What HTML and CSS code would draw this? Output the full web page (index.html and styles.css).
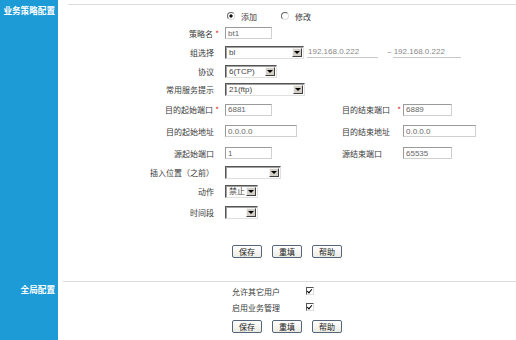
FILE: index.html
```html
<!DOCTYPE html>
<html>
<head>
<meta charset="utf-8">
<link rel="stylesheet" href="styles.css">
</head>
<body>
<div class="page">
  <div class="side side-top"><span>业务策略配置</span></div>
  <div class="main">
    <div class="topline"></div>
    <div class="form">
      <div class="lbl"></div>
      <div class="fld span3">
        <label class="opt"><input type="radio" name="mode" class="rd" checked>添加</label>
        <label class="opt opt2"><input type="radio" name="mode" class="rd">修改</label>
      </div>

      <div class="lbl">策略名<i class="req">*</i></div>
      <div class="fld span3"><input class="txt w47" value="bt1"></div>

      <div class="lbl">组选择</div>
      <div class="fld span3">
        <span class="sel w79"><span class="v">bl</span><span class="ar"></span></span>
        <input class="ip ip1" value="192.168.0.222">
        <span class="tilde">~</span>
        <input class="ip ip2" value="192.168.0.222">
      </div>

      <div class="lbl">协议</div>
      <div class="fld span3"><span class="sel w52"><span class="v">6(TCP)</span><span class="ar"></span></span></div>

      <div class="lbl">常用服务提示</div>
      <div class="fld span3"><span class="sel w80"><span class="v">21(ftp)</span><span class="ar"></span></span></div>

      <div class="lbl">目的起始端口<i class="req">*</i></div>
      <div class="fld"><input class="txt w47" value="6881"></div>
      <div class="lbl2">目的结束端口<i class="req2">*</i></div>
      <div class="fld"><input class="txt w49" value="6889"></div>

      <div class="lbl">目的起始地址</div>
      <div class="fld"><input class="txt w72" value="0.0.0.0"></div>
      <div class="lbl2">目的结束地址</div>
      <div class="fld"><input class="txt w73" value="0.0.0.0"></div>

      <div class="lbl">源起始端口</div>
      <div class="fld"><input class="txt w47" value="1"></div>
      <div class="lbl2">源结束端口</div>
      <div class="fld"><input class="txt w49" value="65535"></div>

      <div class="lbl">插入位置（之前）</div>
      <div class="fld span3"><span class="sel w56"><span class="v"></span><span class="ar"></span></span></div>

      <div class="lbl">动作</div>
      <div class="fld span3"><span class="sel w33"><span class="v">禁止</span><span class="ar"></span></span></div>

      <div class="lbl">时间段</div>
      <div class="fld span3"><span class="sel w33"><span class="v"></span><span class="ar"></span></span></div>
    </div>
    <div class="btns btns1">
      <button class="btn">保存</button>
      <button class="btn">重填</button>
      <button class="btn">帮助</button>
    </div>
  </div>

  <div class="side side-bottom"><span>全局配置</span></div>
  <div class="main2">
    <div class="glob">
      <span class="gl">允许其它用户</span><span class="gc"><input type="checkbox" class="cb" checked></span>
      <span class="gl">启用业务管理</span><span class="gc"><input type="checkbox" class="cb" checked></span>
    </div>
    <div class="btns btns2">
      <button class="btn">保存</button>
      <button class="btn">重填</button>
      <button class="btn">帮助</button>
    </div>
  </div>
</div>
</body>
</html>
```

FILE: styles.css
```css
html, body {
  margin: 0;
  padding: 0;
  background: #fff;
}
body {
  font-family: "Noto Sans CJK SC", "Liberation Sans", sans-serif;
  font-size: 8px;
  color: #3a3a3a;
}
.page {
  width: 516px;
  height: 340px;
  display: grid;
  grid-template-columns: 58px 1fr;
  grid-template-rows: 281px 59px;
  overflow: hidden;
}
.side {
  background: #1d9bd6;
  color: #fff;
  font-weight: bold;
  font-size: 8.6px;
  text-align: right;
  padding-right: 3px;
  line-height: 10px;
  white-space: nowrap;
}
.side-top { padding-top: 5px; }
.side-bottom { padding-top: 3px; }

.main {
  padding-top: 4px;
}
.topline {
  border-top: 1px solid #dcdcdc;
  margin-left: 10px;
}
.form {
  margin-top: 3px;
  display: grid;
  grid-template-columns: 167px 117px 61px 1fr;
  grid-template-rows: 16px 18px 20px 18px 19px 21px 22px 22px 17px 20px 22px;
}
.lbl {
  text-align: right;
  padding-right: 11px;
  display: flex;
  align-items: center;
  justify-content: flex-end;
  white-space: nowrap;
}
.lbl2 {
  display: flex;
  align-items: center;
  white-space: nowrap;
  padding-right: 2px;
}
.req {
  font-style: normal;
  color: #e01010;
  width: 5px;
  margin-right: -5px;
  padding-left: 1px;
  font-size: 8px;
}
.req2 {
  font-style: normal;
  color: #e01010;
  margin-left: auto;
  font-size: 8px;
}
.fld {
  display: flex;
  align-items: center;
}
.span3 { grid-column: 2 / 5; }

.opt {
  display: flex;
  align-items: center;
  margin-left: 2px;
  color: #3a3a3a;
}
.opt2 { margin-left: 24px; }
.rd {
  appearance: none;
  -webkit-appearance: none;
  width: 8px;
  height: 8px;
  margin: 0 6px 0 0;
  border-radius: 50%;
  border: 1px solid;
  border-color: #666 #ddd #ddd #666;
  background: #fff;
  box-sizing: border-box;
}
.rd:checked {
  background: radial-gradient(circle, #111 0, #111 1.4px, #fff 1.8px);
}

.txt {
  box-sizing: border-box;
  height: 12px;
  border: 1px solid;
  border-color: #9a9a9a #d0d0d0 #d0d0d0 #9a9a9a;
  padding: 0 2px;
  margin: 0;
  font-family: "Liberation Sans", sans-serif;
  font-size: 8px;
  color: #666;
  background: #fff;
  outline: none;
}
.w47 { width: 47px; }
.w49 { width: 49px; }
.w72 { width: 72px; }
.w73 { width: 73px; }

.ip {
  box-sizing: border-box;
  height: 12px;
  border: 0;
  border-bottom: 1px solid #c8c8c8;
  padding: 0 1px;
  margin: 0;
  font-family: "Liberation Sans", sans-serif;
  font-size: 8px;
  color: #888;
  background: transparent;
  outline: none;
}
.ip1 { width: 71px; margin-left: 3px; }
.tilde {
  color: #888;
  font-family: "Liberation Sans", sans-serif;
  margin: 0 1px 0 9px;
}
.ip2 { width: 68px; }

.sel {
  display: inline-flex;
  box-sizing: border-box;
  height: 13px;
  border: 1px solid;
  border-color: #555 #e0e0e0 #e0e0e0 #555;
  box-shadow: inset 1px 1px 0 #a0a0a0;
  background: #fff;
  align-items: center;
}
.sel .v {
  flex: 1;
  padding-left: 3px;
  font-family: "Liberation Sans", "Noto Sans CJK SC", sans-serif;
  font-size: 8px;
  color: #444;
  line-height: 11px;
  white-space: nowrap;
  overflow: hidden;
}
.sel .ar {
  width: 10px;
  height: 9px;
  margin-right: 1px;
  box-sizing: border-box;
  background: #d4d0c8;
  border: 1px solid;
  border-color: #f4f4f4 #404040 #404040 #f4f4f4;
  display: flex;
  align-items: center;
  justify-content: center;
}
.sel .ar::after {
  content: "";
  border-left: 3px solid transparent;
  border-right: 3px solid transparent;
  border-top: 3px solid #000;
}
.w79 { width: 79px; }
.w52 { width: 52px; }
.w80 { width: 80px; }
.w56 { width: 56px; }
.w33 { width: 33px; }

.btns {
  display: flex;
  gap: 10px;
  padding-left: 174px;
}
.btns1 { margin-top: 22px; }
.btn {
  box-sizing: border-box;
  width: 30px;
  height: 13px;
  padding: 0;
  margin: 0;
  border: 1px solid #55667a;
  border-radius: 2px;
  background: linear-gradient(#ffffff, #ecebe4);
  font-family: "Noto Sans CJK SC", sans-serif;
  font-size: 8px;
  line-height: 11px;
  color: #222;
}

.main2 {
  border-top: 1px solid #dcdcdc;
  margin-left: 5px;
  padding-top: 2px;
}
.glob {
  display: grid;
  grid-template-columns: 74px 20px;
  grid-template-rows: 14px 18px;
  padding-left: 169px;
}
.gl {
  display: flex;
  align-items: center;
  color: #3a3a3a;
}
.gc {
  display: flex;
  align-items: center;
}
.cb {
  appearance: none;
  -webkit-appearance: none;
  box-sizing: border-box;
  width: 8px;
  height: 8px;
  margin: 0;
  border: 1px solid;
  border-color: #555 #ddd #ddd #555;
  background: #fff;
  position: relative;
}
.cb:checked::after {
  content: "";
  position: absolute;
  left: 1px;
  top: 0;
  width: 2px;
  height: 4px;
  border: solid #000;
  border-width: 0 1.5px 1.5px 0;
  transform: rotate(40deg);
}
.btns2 { margin-top: 4px; padding-left: 169px; }
```
